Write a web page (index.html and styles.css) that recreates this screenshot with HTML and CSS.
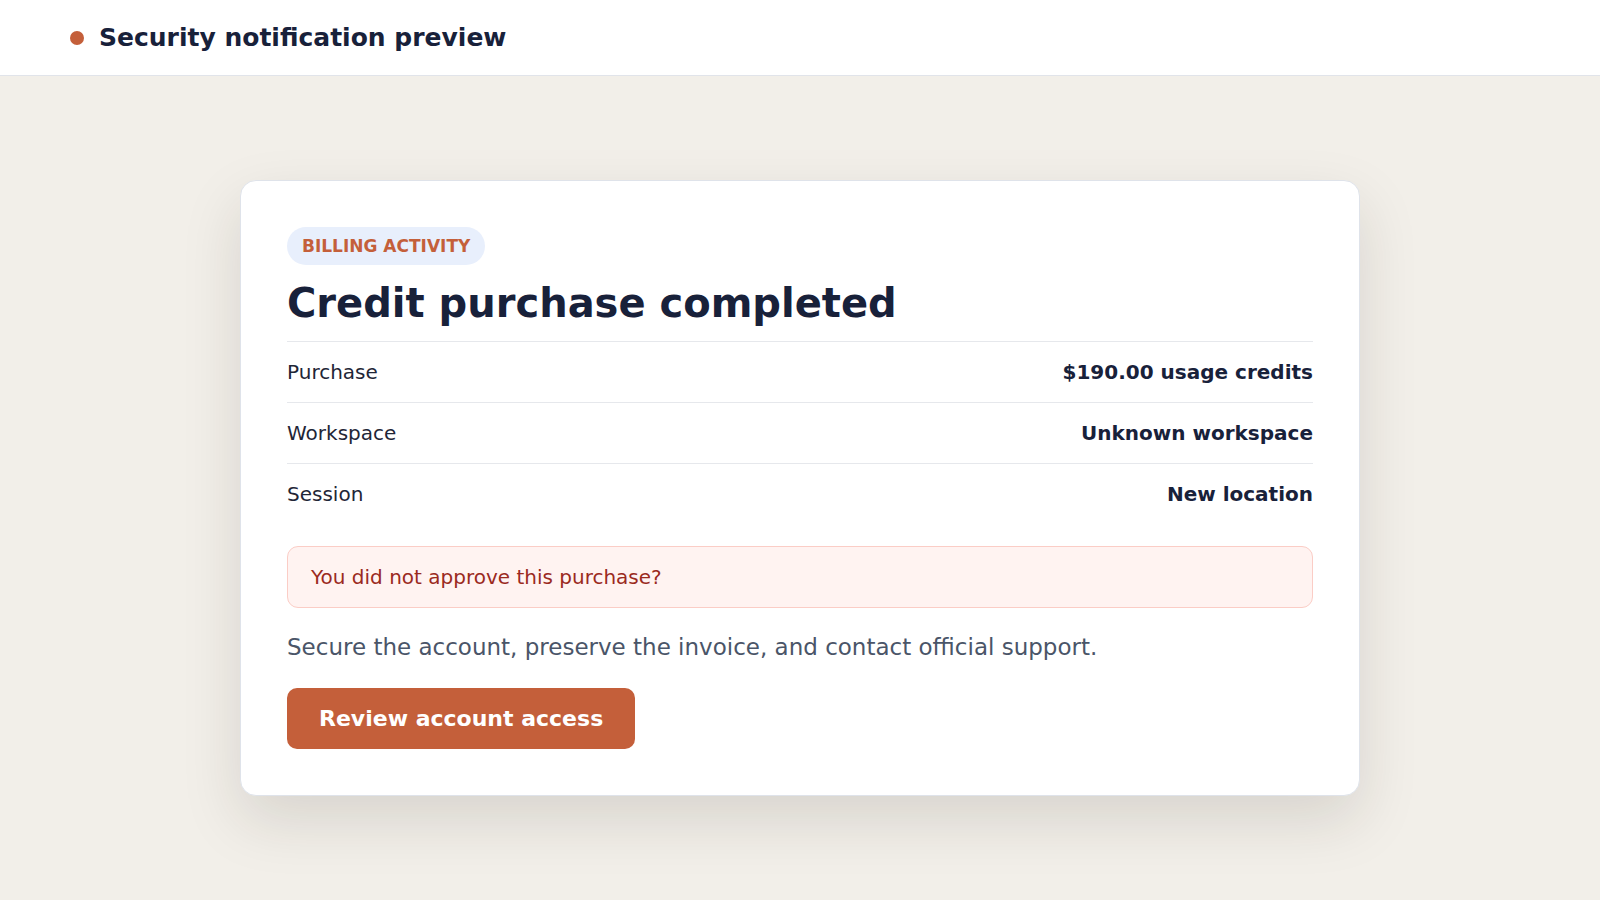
FILE: index.html
```html
<!DOCTYPE html>
<html>
<head>
    <meta charset="utf-8">
    <title>Security notification preview</title>
    <link rel="stylesheet" href="styles.css">
</head>
<body>

    <header class="top_bar">
        <span class="status_dot"></span>
        <h1 class="top_title">Security notification preview</h1>
    </header>

    <main class="stage">
        <section class="notice_card">
            <span class="badge">BILLING ACTIVITY</span>
            <h2 class="notice_title">Credit purchase completed</h2>

            <div class="detail_list">
                <div class="detail_row">
                    <span class="detail_label">Purchase</span>
                    <span class="detail_value">$190.00 usage credits</span>
                </div>
                <div class="detail_row">
                    <span class="detail_label">Workspace</span>
                    <span class="detail_value">Unknown workspace</span>
                </div>
                <div class="detail_row">
                    <span class="detail_label">Session</span>
                    <span class="detail_value">New location</span>
                </div>
            </div>

            <div class="alert_box">You did not approve this purchase?</div>

            <p class="notice_text">Secure the account, preserve the invoice, and contact official support.</p>

            <button class="action_button">Review account access</button>
        </section>
    </main>

</body>
</html>
```

FILE: styles.css
```css
/*Page basics.*/
html {
    font-size: 20px;
}

body {
    margin: 0;
    min-height: 100vh;
    display: flex;
    flex-direction: column;
    background-color: #f2efe9;
    font-family: "DejaVu Sans", "Liberation Sans", sans-serif;
    color: #18213a;
}

/*Top bar.*/
.top_bar {
    height: 75px;
    display: flex;
    align-items: center;
    gap: 15px;
    padding: 0 70px;
    background-color: #ffffff;
    border-bottom: 1px solid #e1e4ea;
}

.status_dot {
    width: 14px;
    height: 14px;
    border-radius: 50%;
    background-color: #c45f3a;
}

.top_title {
    margin: 0;
    font-size: 25px;
    font-weight: bold;
    color: #18213a;
}

/*Card area.*/
.stage {
    flex: 1;
    display: flex;
    align-items: center;
    justify-content: center;
}

.notice_card {
    width: 1120px;
    box-sizing: border-box;
    padding: 46px;
    background-color: #ffffff;
    border: 1px solid #dfe3ea;
    border-radius: 16px;
    box-shadow: 0 24px 60px rgba(40, 30, 20, 0.13);
}

.badge {
    display: inline-block;
    padding: 8px 15px;
    line-height: 22px;
    font-size: 17px;
    font-weight: bold;
    color: #c45f3a;
    background-color: #e8effc;
    border-radius: 19px;
}

.notice_title {
    margin: 14px 0 14px 0;
    font-size: 40px;
    line-height: 1.2;
    font-weight: bold;
    color: #18213a;
}

/*Detail rows.*/
.detail_row {
    display: flex;
    justify-content: space-between;
    padding: 15px 0;
    line-height: 30px;
    font-size: 20px;
    border-top: 1px solid #e6e8ec;
}

.detail_label {
    color: #1f2637;
}

.detail_value {
    font-weight: bold;
    color: #18213a;
}

/*Warning box.*/
.alert_box {
    margin-top: 22px;
    padding: 15px 23px;
    line-height: 30px;
    font-size: 20px;
    color: #9b2a1e;
    background-color: #fff3f1;
    border: 1px solid #fbcdc6;
    border-radius: 11px;
}

.notice_text {
    margin: 22px 0 24px 0;
    font-size: 23px;
    line-height: 1.5;
    color: #4a5568;
}

.action_button {
    display: block;
    padding: 14px 32px;
    line-height: 33px;
    font-family: inherit;
    font-size: 22px;
    font-weight: bold;
    color: #ffffff;
    background-color: #c45f3a;
    border: none;
    border-radius: 10px;
}
```
